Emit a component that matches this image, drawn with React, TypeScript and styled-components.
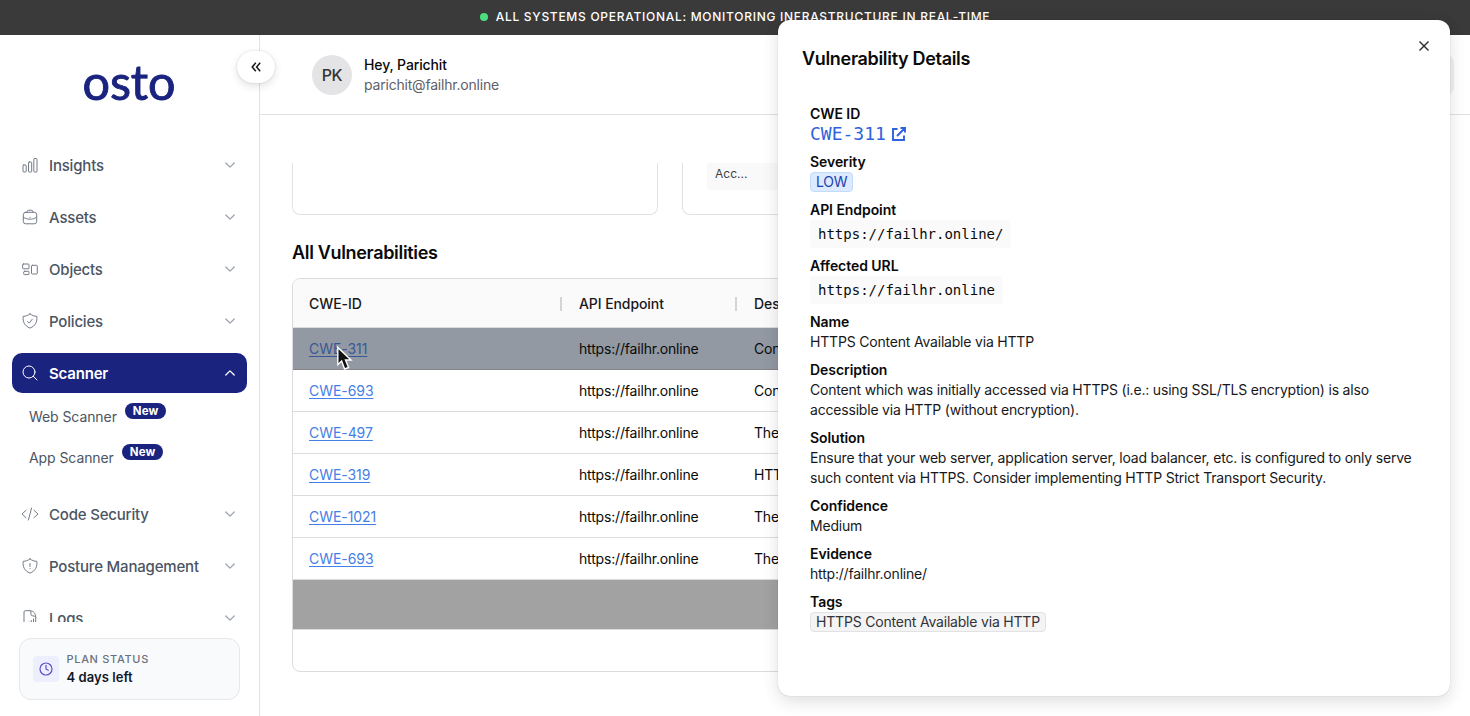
import React from "react";
import styled, { createGlobalStyle, css } from "styled-components";

const navy = "#1a237e";
const sans = `Inter, "Liberation Sans", sans-serif`;
const mono = `"DejaVu Sans Mono", "Liberation Mono", monospace`;

const GlobalStyle = createGlobalStyle`
  *, *::before, *::after { box-sizing: border-box; }
  body { margin: 0; background: #fff; color: #0a0a0a; font-family: ${sans}; font-size: 14px; line-height: 20px; overflow: hidden; }
`;

const Page = styled.div`
  position: relative;
  display: flex;
  flex-direction: column;
  width: 1470px;
  height: 716px;
  overflow: hidden;
`;

const Banner = styled.div`
  flex: none;
  display: flex;
  align-items: center;
  justify-content: center;
  gap: 8px;
  height: 35px;
  padding-bottom: 2px;
  background: #3a3a3a;
  color: #fff;
  font-size: 12px;
  font-weight: 500;
  letter-spacing: 0.72px;
  white-space: nowrap;
`;

const StatusDot = styled.span`
  width: 8px;
  height: 8px;
  border-radius: 50%;
  background: #4ade80;
`;

const Shell = styled.div`
  flex: 1;
  display: flex;
  min-height: 0;
`;

const Sidebar = styled.aside`
  position: relative;
  flex: none;
  display: flex;
  flex-direction: column;
  width: 260px;
  border-right: 1px solid #e2e2e5;
`;

const LogoArea = styled.div`
  flex: none;
  display: flex;
  justify-content: center;
  height: 110px;
  padding-top: 18px;
`;

const CollapseButton = styled.button`
  position: absolute;
  top: 16px;
  right: -16px;
  display: flex;
  align-items: center;
  justify-content: center;
  width: 38px;
  height: 32px;
  padding: 0;
  border: 0;
  border-radius: 16px;
  background: #fff;
  box-shadow: 0 0 2px rgba(0, 0, 0, 0.15), 0 3px 8px rgba(0, 0, 0, 0.12);
`;

const Nav = styled.nav`
  flex: none;
  display: flex;
  flex-direction: column;
  gap: 12px;
  height: 477px;
  padding: 0 12px;
  overflow: hidden;
`;

const NavItem = styled.div<{ $active?: boolean }>`
  flex: none;
  display: flex;
  align-items: center;
  height: 40px;
  padding: 0 11px 0 10px;
  border-radius: 10px;
  color: #4b5563;
  font-size: 15px;
  font-weight: 500;
  letter-spacing: -0.19px;
  ${(p) =>
    p.$active &&
    css`
      background: ${navy};
      color: #fff;
      font-weight: 600;
    `}
`;

const NavIcon = styled.svg<{ $active?: boolean }>`
  flex: none;
  width: 16px;
  height: 16px;
  margin-right: 11px;
  overflow: visible;
  fill: none;
  stroke: ${(p) => (p.$active ? "#fff" : "#747b87")};
  stroke-width: 1;
  stroke-linecap: round;
  stroke-linejoin: round;
`;

const NavLabel = styled.span`
  flex: 1;
  padding-top: 1px;
  white-space: nowrap;
`;

const ChevronSvg = styled.svg<{ $active?: boolean }>`
  width: 12px;
  height: 12px;
  fill: none;
  stroke: ${(p) => (p.$active ? "#fff" : "#9ca3af")};
  stroke-width: 1.3;
  stroke-linecap: round;
  stroke-linejoin: round;
`;

const SubNav = styled.div`
  flex: none;
  display: flex;
  flex-direction: column;
  height: 89px;
  margin-top: -12px;
  padding: 3px 17px 0;
`;

const SubItem = styled.div`
  display: flex;
  align-items: center;
  gap: 8px;
  height: 41px;
  color: #4b5563;
  font-size: 14px;
  letter-spacing: -0.08px;
`;

const NewBadge = styled.span`
  height: 16px;
  padding: 0 8px;
  margin-bottom: 11px;
  border-radius: 8px;
  background: ${navy};
  color: #fff;
  font-size: 11.5px;
  font-weight: 700;
  letter-spacing: 0.1px;
  line-height: 16px;
`;

const PlanCard = styled.div`
  display: flex;
  align-items: center;
  gap: 8px;
  width: 221px;
  height: 62px;
  margin: 16px 0 0 19px;
  padding: 0 12.5px;
  border: 1px solid #e5e7eb;
  border-radius: 12px;
  background: #f9fafc;
`;

const PlanIcon = styled.div`
  display: flex;
  align-items: center;
  justify-content: center;
  width: 26px;
  height: 26px;
  border-radius: 4px;
  background: #eeeffe;
`;

const PlanText = styled.div`
  padding-bottom: 2px;
`;

const PlanCaption = styled.div`
  color: #6b7280;
  font-size: 11px;
  font-weight: 500;
  letter-spacing: 0.68px;
  line-height: 18px;
`;

const PlanValue = styled.div`
  color: #111827;
  font-size: 13px;
  font-weight: 600;
  letter-spacing: 0.06px;
  line-height: 18px;
`;

const Main = styled.main`
  flex: 1;
  display: flex;
  flex-direction: column;
  min-width: 0;
`;

const Header = styled.header`
  flex: none;
  display: flex;
  align-items: center;
  height: 80px;
  padding: 0 16px 0 52px;
  border-bottom: 1px solid #e2e2e5;
`;

const Avatar = styled.div`
  display: flex;
  align-items: center;
  justify-content: center;
  width: 40px;
  height: 40px;
  margin-right: 12px;
  border-radius: 50%;
  background: #e4e4e6;
  color: #333;
  font-size: 16px;
  font-weight: 500;
  letter-spacing: -0.3px;
`;

const Greeting = styled.div`
  flex: 1;
  color: #0a0a0a;
  font-weight: 500;
  letter-spacing: -0.12px;
`;

const Email = styled.div`
  color: #5f6168;
  font-weight: 400;
  letter-spacing: -0.2px;
`;

const HeaderAction = styled.div`
  width: 40px;
  height: 40px;
  border-radius: 8px;
  background: #f1f1f2;
`;

const Content = styled.div`
  flex: 1;
  min-height: 0;
  margin-top: 48px;
  padding: 0 32px;
  overflow: hidden;
`;

const CardRow = styled.div`
  display: grid;
  grid-template-columns: repeat(3, 1fr);
  gap: 24px;
  height: 52px;
`;

const SummaryCard = styled.div`
  padding: 0 24px;
  border: 1px solid #e2e2e5;
  border-top: 0;
  border-radius: 0 0 8px 8px;
`;

const SummaryRow = styled.div`
  height: 27px;
  padding: 0 8px;
  border-radius: 0 0 4px 4px;
  background: #f9f9fa;
  color: #3f3f46;
  font-size: 12px;
  line-height: 21px;
`;

const SectionTitle = styled.h2`
  margin: 24px 0 12px;
  font-size: 18px;
  font-weight: 600;
  letter-spacing: -0.33px;
  line-height: 27px;
`;

const Table = styled.div`
  border: 1px solid #dcdce0;
  border-radius: 8px;
  overflow: hidden;
`;

const Row = styled.div<{ $kind?: "head" | "selected" | "filler" | "foot" }>`
  display: grid;
  grid-template-columns: 270px 175px 1fr;
  align-items: center;
  height: 42px;
  border-bottom: 1px solid #dcdce0;
  letter-spacing: -0.18px;
  ${(p) =>
    p.$kind === "head" &&
    css`
      height: 49px;
      padding-top: 1px;
      background: #fafafb;
      color: #18181b;
      font-weight: 500;
      letter-spacing: -0.08px;
    `}
  ${(p) => p.$kind === "selected" && css`background: #9299a3; border-color: #858585;`}
  ${(p) => p.$kind === "filler" && css`height: 50px; background: #a2a2a2;`}
  ${(p) => p.$kind === "foot" && css`height: 41px; border-bottom: 0;`}
`;

const Cell = styled.div`
  display: flex;
  align-items: center;
  justify-content: space-between;
  padding: 0 1px 0 16px;
  white-space: nowrap;
`;

const ColumnGrip = styled.span`
  width: 2px;
  height: 14px;
  background: #d4d4d8;
`;

const CweLink = styled.a<{ $selected?: boolean }>`
  color: ${(p) => (p.$selected ? "#3a5795" : "#4580e6")};
  letter-spacing: -0.06px;
  text-decoration: underline;
  text-underline-offset: 2px;
`;

const Drawer = styled.section`
  position: absolute;
  top: 20px;
  right: 20px;
  width: 672px;
  height: 676px;
  padding: 25px 24px 24px;
  border-radius: 12px;
  background: #fff;
  box-shadow: 0 0 1px rgba(0, 0, 0, 0.3), 0 6px 16px rgba(0, 0, 0, 0.1), 0 3px 24px rgba(0, 0, 0, 0.03);
`;

const DrawerTitle = styled.h1`
  margin: 0 0 31px;
  font-size: 18px;
  font-weight: 600;
  letter-spacing: -0.32px;
  line-height: 28px;
`;

const CloseButton = styled.button`
  position: absolute;
  top: 18px;
  right: 18px;
  display: flex;
  padding: 0;
  border: 0;
  background: none;
`;

const Details = styled.dl`
  display: flex;
  flex-direction: column;
  gap: 8px;
  margin: 0;
  padding: 0 8px;
`;

const Term = styled.dt`
  height: 20px;
  font-weight: 600;
  letter-spacing: -0.06px;
`;

const Value = styled.dd`
  display: flex;
  margin: 0;
  color: #18181b;
  letter-spacing: -0.195px;
`;

const DetailLink = styled.a`
  display: flex;
  align-items: center;
  gap: 5px;
  color: #2f62dd;
  font-family: ${mono};
  font-size: 18px;
  letter-spacing: 0;
`;

const Code = styled.code`
  height: 28px;
  padding: 0 8px;
  border-radius: 4px;
  background: #fafafa;
  color: #0a0a0a;
  font-family: ${mono};
  font-size: 14px;
  letter-spacing: 0;
  line-height: 28px;
`;

const Tag = styled.span<{ $low?: boolean }>`
  height: 20px;
  padding: 0 5px;
  border: 1px solid ${(p) => (p.$low ? "#c3dafa" : "#e2e2e4")};
  border-radius: 4px;
  background: ${(p) => (p.$low ? "#dbeafe" : "#f4f4f5")};
  color: ${(p) => (p.$low ? "#1e40af" : "#333338")};
  line-height: 18px;
`;

const Cursor = styled.svg`
  position: absolute;
  left: 335px;
  top: 345px;
  width: 20px;
  height: 28px;
`;

const shield = "M8 .9C10 2.5 12.400 3.300 14.800 3.300C15.500 8.500 13.500 13 8 15.100C2.500 13 .5 8.500 1.200 3.300C3.600 3.300 6 2.500 8 .9Z";

const icons: Record<string, React.ReactNode> = {
  Insights: (
    <>
      <rect x="1" y="8" width="3.200" height="7" rx="0.800" />
      <rect x="6.500" y="5" width="3.200" height="10" rx="0.800" />
      <rect x="11.800" y="1.500" width="3.200" height="13.500" rx="0.800" />
    </>
  ),
  Assets: (
    <>
      <rect x="1.300" y="3.300" width="13.400" height="11.500" rx="2.400" />
      <path d="M5.200 3.300V2.800A1.600 1.600 0 0 1 6.800 1.200H9.200A1.600 1.600 0 0 1 10.800 2.800V3.300M1.500 8.300C3.500 9.700 5.700 10.200 8 10.200S12.500 9.700 14.500 8.300M8 8.300V8.500" />
    </>
  ),
  Objects: (
    <>
      <rect x="0.600" y="3" width="6.400" height="4.800" rx="0.800" />
      <rect x="1.700" y="10.300" width="5.300" height="3.300" rx="0.800" />
      <rect x="9.500" y="4.300" width="5.800" height="8.700" rx="0.800" />
    </>
  ),
  Policies: (
    <>
      <path d={shield} />
      <path d="M5.700 8.500L7.300 10.100L10.300 6.200" />
    </>
  ),
  Scanner: (
    <>
      <circle cx="7" cy="7" r="6" />
      <path d="M11.300 11.300L15 15" />
    </>
  ),
  "Code Security": <path d="M4 4.300L0 8L4 11.700M12 4.300L16 8L12 11.700M9.600 2L6.400 14" />,
  "Posture Management": (
    <>
      <path d={shield} />
      <path d="M8 5.500V8.500M8 10.600V10.700" />
    </>
  ),
  Logs: (
    <>
      <path d="M13.700 15V7.300C13.700 3.500 11.500 .7 8 .7H3.200C2.500 .7 2 1.200 2 2V14.500C2 15 2.500 15.500 3 15.500H13.700" />
      <path d="M8 .7C9 1.500 9 2 9 4.500C9 5.500 10 6 12.500 6L13.700 7.300M7 13V12M9.300 13V10.500M11.500 13V9" />
    </>
  ),
};

function NavEntry({ label, active }: { label: string; active?: boolean }) {
  return (
    <NavItem $active={active}>
      <NavIcon viewBox="0 0 16 16" $active={active}>{icons[label]}</NavIcon>
      <NavLabel>{label}</NavLabel>
      <ChevronSvg viewBox="0 0 12 12" $active={active}>
        <path d={active ? "M1.800 8L6 3.900L10.200 8" : "M1.800 4L6 8.100L10.200 4"} />
      </ChevronSvg>
    </NavItem>
  );
}

const vulnerabilities = [
  ["CWE-311", "Content"],
  ["CWE-693", "Content"],
  ["CWE-497", "The"],
  ["CWE-319", "HTTPS"],
  ["CWE-1021", "The"],
  ["CWE-693", "The"],
];

function Detail({ term, children }: { term: string; children: React.ReactNode }) {
  return (
    <div>
      <Term>{term}</Term>
      <Value>{children}</Value>
    </div>
  );
}

export default function App() {
  return (
    <Page>
      <GlobalStyle />
      <Banner>
        <StatusDot />
        ALL SYSTEMS OPERATIONAL: MONITORING INFRASTRUCTURE IN REAL-TIME
      </Banner>
      <Shell>
        <Sidebar>
          <LogoArea>
            <svg width="98" height="68" viewBox="0 0 98 68">
              <text
                x="1.500"
                y="46.500"
                textLength="93"
                fontFamily="Lato, sans-serif"
                fontSize="48.500"
                fill={navy}
                stroke={navy}
                strokeWidth="0.900"
              >
                osto
              </text>
            </svg>
          </LogoArea>
          <CollapseButton aria-label="Collapse sidebar">
            <svg width="10" height="10" viewBox="0 0 10 10" fill="none" stroke="#18181b" strokeWidth="1.500">
              <path d="M4.800 .8L1.200 5L4.800 9.200M9.200 .8L5.600 5L9.200 9.200" />
            </svg>
          </CollapseButton>
          <Nav>
            <NavEntry label="Insights" />
            <NavEntry label="Assets" />
            <NavEntry label="Objects" />
            <NavEntry label="Policies" />
            <NavEntry label="Scanner" active />
            <SubNav>
              <SubItem>Web Scanner<NewBadge>New</NewBadge></SubItem>
              <SubItem>App Scanner<NewBadge>New</NewBadge></SubItem>
            </SubNav>
            <NavEntry label="Code Security" />
            <NavEntry label="Posture Management" />
            <NavEntry label="Logs" />
          </Nav>
          <PlanCard>
            <PlanIcon>
              <svg width="14" height="14" viewBox="0 0 14 14" fill="none" stroke="#5b4fc4" strokeWidth="1.200" strokeLinecap="round">
                <circle cx="7" cy="7" r="6" />
                <path d="M7 3.300V7L9.300 8.200" />
              </svg>
            </PlanIcon>
            <PlanText>
              <PlanCaption>PLAN STATUS</PlanCaption>
              <PlanValue>4 days left</PlanValue>
            </PlanText>
          </PlanCard>
        </Sidebar>
        <Main>
          <Header>
            <Avatar>PK</Avatar>
            <Greeting>
              Hey, Parichit
              <Email>parichit@failhr.online</Email>
            </Greeting>
            <HeaderAction />
          </Header>
          <Content>
            <CardRow>
              <SummaryCard />
              <SummaryCard>
                <SummaryRow>Acc...</SummaryRow>
              </SummaryCard>
              <SummaryCard />
            </CardRow>
            <SectionTitle>All Vulnerabilities</SectionTitle>
            <Table>
              <Row $kind="head">
                <Cell>CWE-ID<ColumnGrip /></Cell>
                <Cell>API Endpoint<ColumnGrip /></Cell>
                <Cell>Description</Cell>
              </Row>
              {vulnerabilities.map(([id, description], i) => (
                <Row key={i} $kind={i === 0 ? "selected" : undefined}>
                  <Cell><CweLink $selected={i === 0}>{id}</CweLink></Cell>
                  <Cell>https://failhr.online</Cell>
                  <Cell>{description}</Cell>
                </Row>
              ))}
              <Row $kind="filler" />
              <Row $kind="foot" />
            </Table>
          </Content>
        </Main>
      </Shell>
      <Cursor viewBox="0 0 20 28">
        <path d="M2.800 2.500V19.700L6.600 16.100L9.600 24L13.600 22.500L10.500 15H16Z" fill="#111" stroke="#fff" strokeWidth="1.400" />
      </Cursor>
      <Drawer>
        <DrawerTitle>Vulnerability Details</DrawerTitle>
        <CloseButton aria-label="Close">
          <svg width="16" height="16" viewBox="0 0 16 16" stroke="#27272a" strokeWidth="1.400">
            <path d="M3.500 3.500L12.500 12.500M12.500 3.500L3.500 12.500" />
          </svg>
        </CloseButton>
        <Details>
          <Detail term="CWE ID">
            <DetailLink>
              CWE-311
              <svg width="16" height="16" viewBox="0 0 16 16" fill="none" stroke="currentColor" strokeWidth="1.900">
                <path d="M6.500 3H2V14H13V9.500M6 10L13.500 2.500M9.500 2H14V6.500" />
              </svg>
            </DetailLink>
          </Detail>
          <Detail term="Severity"><Tag $low>LOW</Tag></Detail>
          <Detail term="API Endpoint"><Code>https://failhr.online/</Code></Detail>
          <Detail term="Affected URL"><Code>https://failhr.online</Code></Detail>
          <Detail term="Name">HTTPS Content Available via HTTP</Detail>
          <Detail term="Description">
            Content which was initially accessed via HTTPS (i.e.: using SSL/TLS encryption) is also accessible via HTTP (without encryption).
          </Detail>
          <Detail term="Solution">
            Ensure that your web server, application server, load balancer, etc. is configured to only serve such content via HTTPS. Consider implementing HTTP Strict Transport Security.
          </Detail>
          <Detail term="Confidence">Medium</Detail>
          <Detail term="Evidence">http://failhr.online/</Detail>
          <Detail term="Tags"><Tag>HTTPS Content Available via HTTP</Tag></Detail>
        </Details>
      </Drawer>
    </Page>
  );
}
